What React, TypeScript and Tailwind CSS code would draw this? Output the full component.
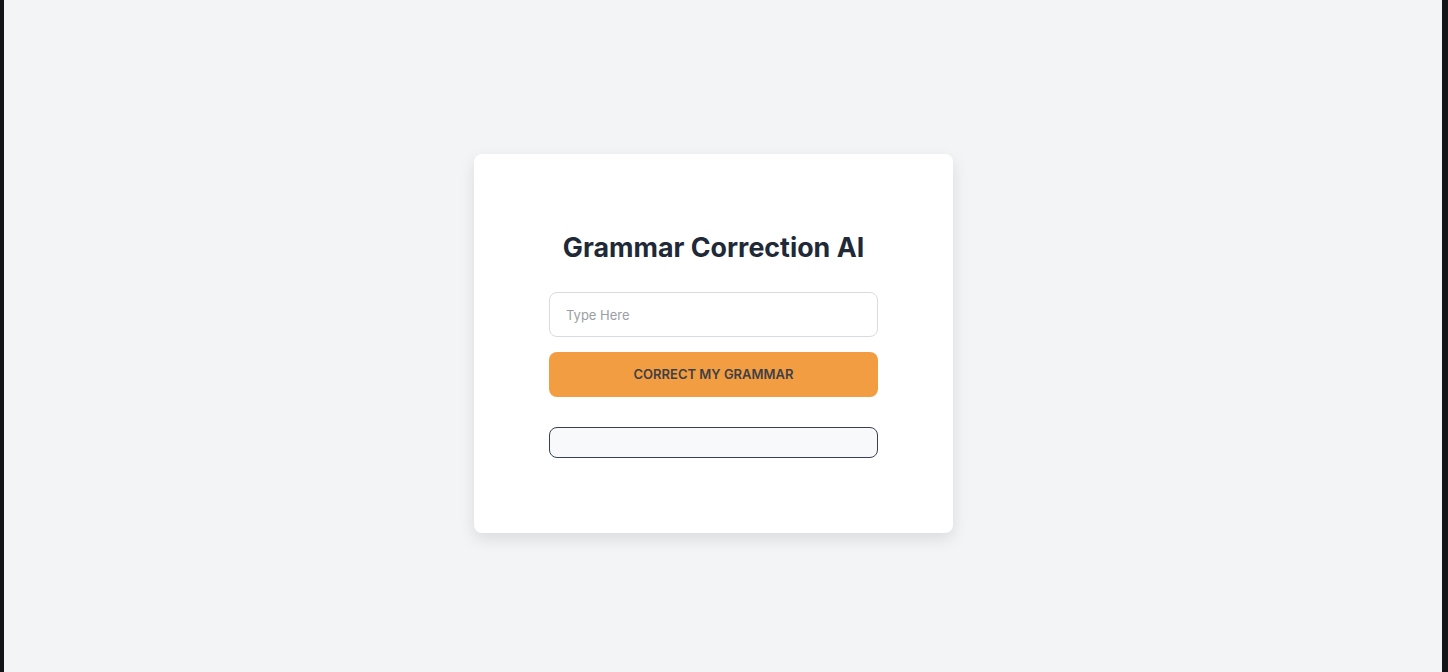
export default function App() {
  return (
    <div className="flex h-[672px] w-full bg-[#121418] font-['Inter','Liberation_Sans',sans-serif]">
      <div className="w-[4px]" />
      <main className="flex flex-1 items-center justify-center bg-[#f3f4f6] pt-[15px] pr-[19px]">
        <div className="w-[479px] rounded-lg bg-white p-[75px] shadow-[0_6px_16px_rgba(0,0,0,0.1)]">
          <h1 className="mb-[27px] whitespace-nowrap text-center text-[26.8px] font-bold leading-9 text-[#1f2937]">
            Grammar Correction AI
          </h1>
          <input
            type="text"
            placeholder="Type Here"
            className="block h-[45px] w-full rounded-lg border border-[#d9dbe0] px-4 text-[13px] text-gray-800 placeholder:text-[#9b9ea4] focus:outline-none"
          />
          <button className="mt-[15px] block h-[45px] w-full rounded-lg bg-[#f29d41] text-[13px] font-semibold uppercase text-[#3f3f46]">
            Correct my grammar
          </button>
          <div className="mt-[30px] h-[31px] w-full rounded-lg border border-[#374151] bg-[#f8f9fb]" />
        </div>
      </main>
      <div className="w-[6px]" />
    </div>
  )
}
